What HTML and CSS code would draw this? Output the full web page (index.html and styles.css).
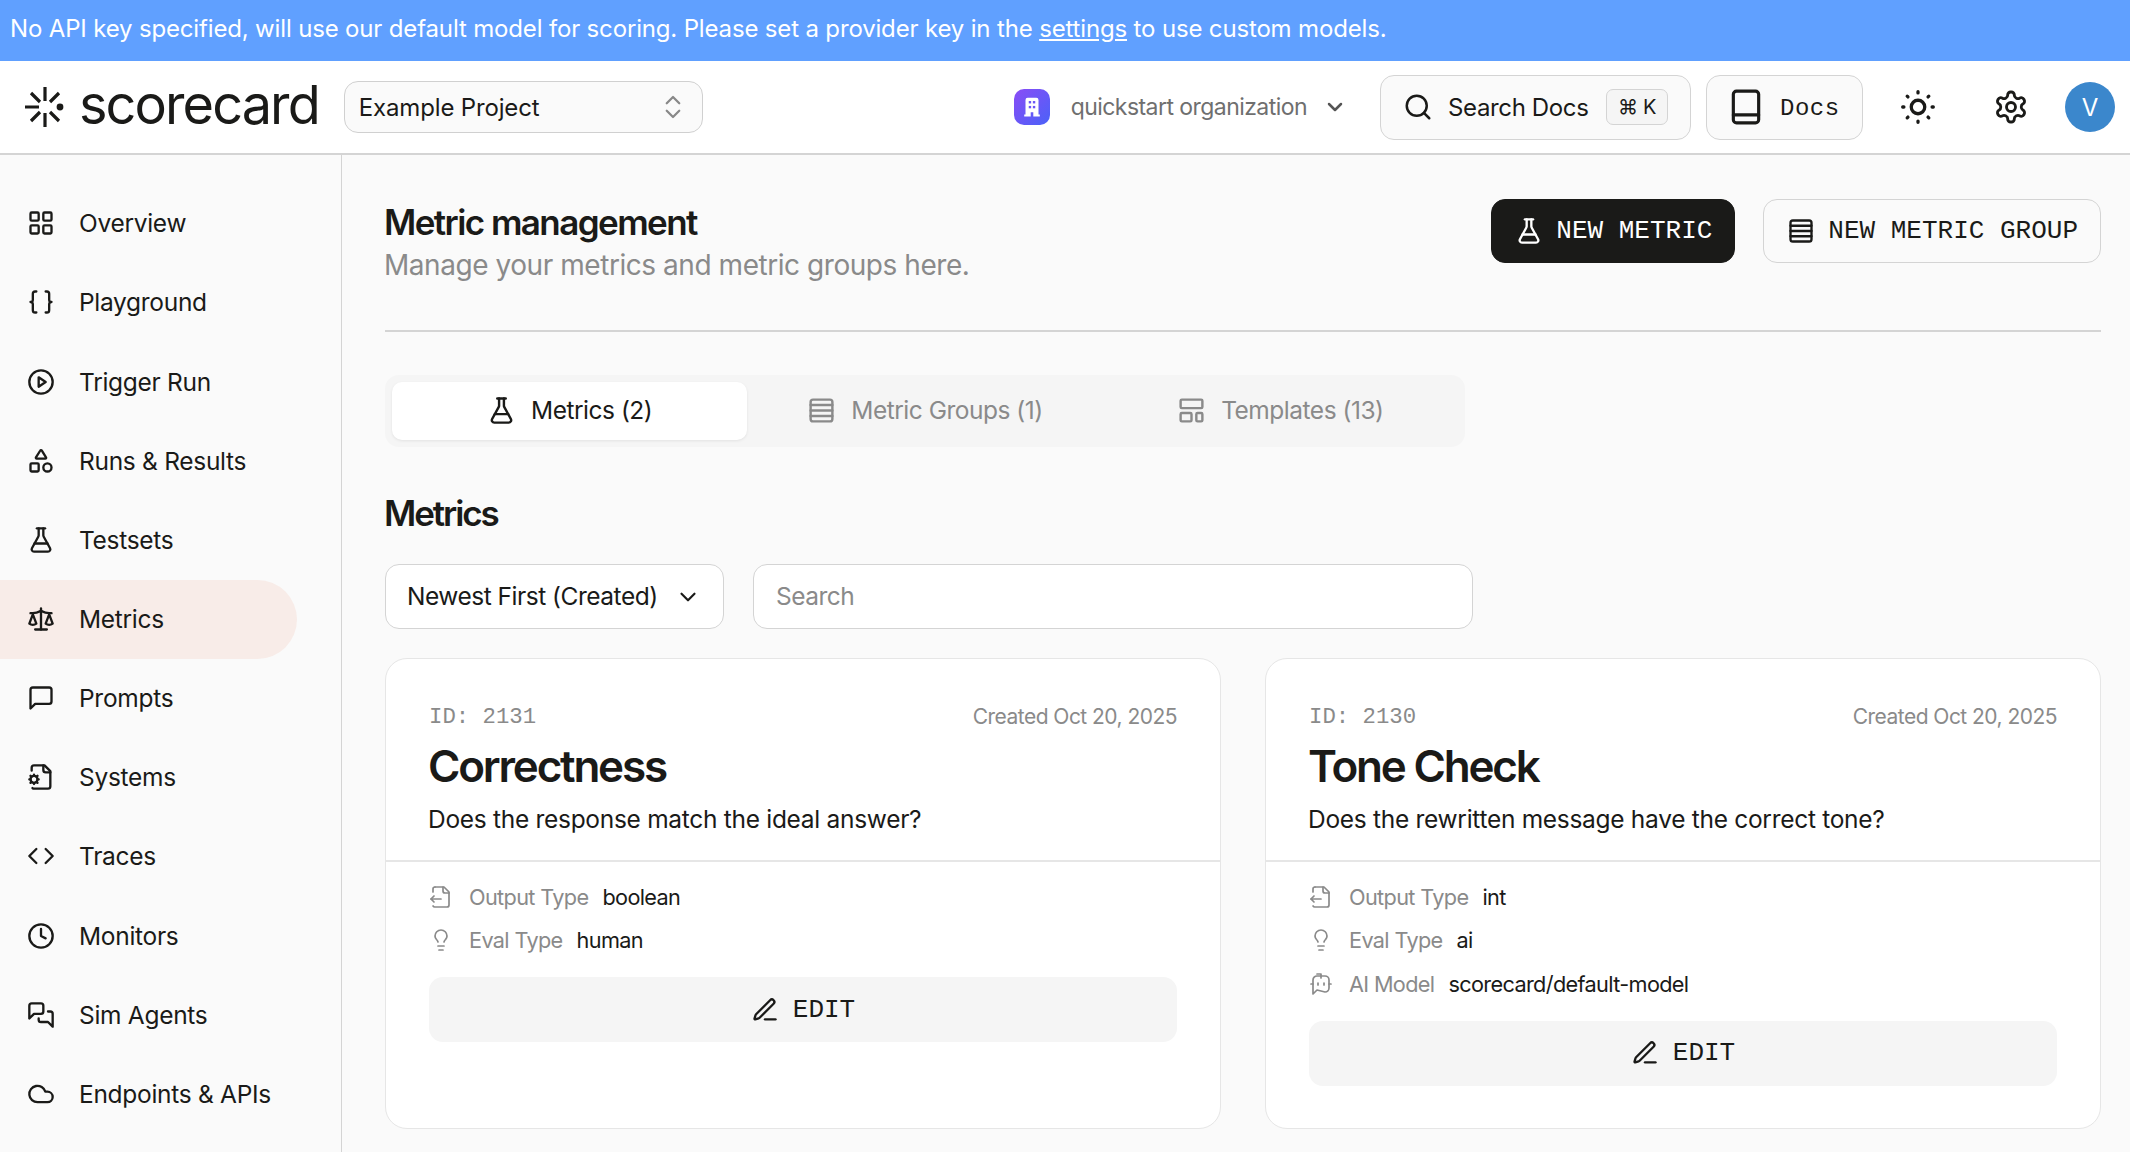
FILE: index.html
```html
<!DOCTYPE html>
<html lang="en">
<head>
    <meta charset="UTF-8">
    <title>Metric management</title>
    <link rel="stylesheet" href="styles.css">
</head>
<body>
    <svg class="sprite" xmlns="http://www.w3.org/2000/svg">
        <symbol id="i-grid" viewBox="0 0 24 24"><rect x="3" y="3" width="7" height="7" rx="1"/><rect x="14" y="3" width="7" height="7" rx="1"/><rect x="14" y="14" width="7" height="7" rx="1"/><rect x="3" y="14" width="7" height="7" rx="1"/></symbol>
        <symbol id="i-braces" viewBox="0 0 24 24"><path d="M8 3H7a2 2 0 0 0-2 2v5a2 2 0 0 1-2 2 2 2 0 0 1 2 2v5c0 1.1.9 2 2 2h1"/><path d="M16 21h1a2 2 0 0 0 2-2v-5c0-1.1.9-2 2-2a2 2 0 0 1-2-2V5a2 2 0 0 0-2-2h-1"/></symbol>
        <symbol id="i-play" viewBox="0 0 24 24"><circle cx="12" cy="12" r="10"/><polygon points="10 8 16 12 10 16 10 8"/></symbol>
        <symbol id="i-shapes" viewBox="0 0 24 24"><path d="M8.3 10a.7.7 0 0 1-.626-1.079L11.4 3a.7.7 0 0 1 1.198-.043L16.3 8.9a.7.7 0 0 1-.572 1.1Z"/><rect x="3" y="14" width="7" height="7" rx="1"/><circle cx="17.5" cy="17.5" r="3.5"/></symbol>
        <symbol id="i-flask" viewBox="0 0 24 24"><path d="M14 2v6a2 2 0 0 0 .245.96l5.51 10.08A2 2 0 0 1 18 22H6a2 2 0 0 1-1.755-2.96l5.51-10.08A2 2 0 0 0 10 8V2"/><path d="M6.453 15h11.094"/><path d="M8.5 2h7"/></symbol>
        <symbol id="i-scale" viewBox="0 0 24 24"><path d="m16 16 3-8 3 8c-.87.65-1.92 1-3 1s-2.13-.35-3-1Z"/><path d="m2 16 3-8 3 8c-.87.65-1.92 1-3 1s-2.13-.35-3-1Z"/><path d="M7 21h10"/><path d="M12 3v18"/><path d="M3 7h2c2 0 5-1 7-2 2 1 5 2 7 2h2"/></symbol>
        <symbol id="i-message" viewBox="0 0 24 24"><path d="M21 15a2 2 0 0 1-2 2H7l-4 4V5a2 2 0 0 1 2-2h14a2 2 0 0 1 2 2z"/></symbol>
        <symbol id="i-filecog" viewBox="0 0 24 24"><path d="M14 2v4a2 2 0 0 0 2 2h4"/><path d="M4.7 21.5a2 2 0 0 0 1.3.5h12a2 2 0 0 0 2-2V7l-5-5H6a2 2 0 0 0-2 2v2.5"/><circle cx="6" cy="14" r="3"/><path d="M6 10v1M6 17v1M10 14H9M3 14H2M9 11l-.9.9M3.9 16.100l-.9.9M9 17l-.9-.9M3.9 11.900 3 11"/></symbol>
        <symbol id="i-code" viewBox="0 0 24 24"><path d="m16 18 6-6-6-6"/><path d="m8 6-6 6 6 6"/></symbol>
        <symbol id="i-clock" viewBox="0 0 24 24"><circle cx="12" cy="12" r="10"/><polyline points="12 6 12 12 16 14"/></symbol>
        <symbol id="i-messages" viewBox="0 0 24 24"><path d="M14 9a2 2 0 0 1-2 2H6l-4 4V4a2 2 0 0 1 2-2h8a2 2 0 0 1 2 2z"/><path d="M18 9h2a2 2 0 0 1 2 2v11l-4-4h-6a2 2 0 0 1-2-2v-1"/></symbol>
        <symbol id="i-cloud" viewBox="0 0 24 24"><path d="M17.500 19H9a7 7 0 1 1 6.710-9h1.790a4.500 4.500 0 1 1 0 9Z"/></symbol>
        <symbol id="i-search" viewBox="0 0 24 24"><circle cx="11" cy="11" r="8"/><path d="m21 21-4.300-4.300"/></symbol>
        <symbol id="i-book" viewBox="0 0 24 24"><rect x="4" y="2" width="16" height="20" rx="2"/><path d="M4 17h16"/></symbol>
        <symbol id="i-sun" viewBox="0 0 24 24"><circle cx="12" cy="12" r="4.500"/><path d="M12 1.800v.8M12 21.400v.8M4.800 4.800l.5.5M18.700 18.700l.5.5M1.800 12h.8M21.400 12h.8M4.800 19.200l.5-.5M18.700 5.300l.5-.5"/></symbol>
        <symbol id="i-gear" viewBox="0 0 24 24"><path d="M12.220 2h-.44a2 2 0 0 0-2 2v.18a2 2 0 0 1-1 1.730l-.43.25a2 2 0 0 1-2 0l-.15-.08a2 2 0 0 0-2.730.73l-.22.38a2 2 0 0 0 .73 2.730l.15.1a2 2 0 0 1 1 1.720v.51a2 2 0 0 1-1 1.740l-.15.09a2 2 0 0 0-.73 2.730l.22.38a2 2 0 0 0 2.730.73l.15-.08a2 2 0 0 1 2 0l.43.25a2 2 0 0 1 1 1.730V20a2 2 0 0 0 2 2h.44a2 2 0 0 0 2-2v-.18a2 2 0 0 1 1-1.730l.43-.25a2 2 0 0 1 2 0l.15.08a2 2 0 0 0 2.730-.73l.22-.39a2 2 0 0 0-.73-2.730l-.15-.08a2 2 0 0 1-1-1.740v-.5a2 2 0 0 1 1-1.740l.15-.09a2 2 0 0 0 .73-2.730l-.22-.38a2 2 0 0 0-2.730-.73l-.15.08a2 2 0 0 1-2 0l-.43-.25a2 2 0 0 1-1-1.730V4a2 2 0 0 0-2-2z"/><circle cx="12" cy="12" r="3"/></symbol>
        <symbol id="i-rows" viewBox="0 0 24 24"><rect x="3" y="3" width="18" height="18" rx="2"/><path d="M21 7.500H3M21 12H3M21 16.500H3"/></symbol>
        <symbol id="i-template" viewBox="0 0 24 24"><rect x="3" y="3" width="18" height="7" rx="1"/><rect x="3" y="14" width="9" height="7" rx="1"/><rect x="16" y="14" width="5" height="7" rx="1"/></symbol>
        <symbol id="i-pencil" viewBox="0 0 24 24"><path d="M12 20h9"/><path d="M16.376 3.622a1 1 0 0 1 3.002 3.002L7.368 18.635a2 2 0 0 1-.855.506l-2.872.838a.5.5 0 0 1-.62-.62l.838-2.872a2 2 0 0 1 .506-.854z"/></symbol>
        <symbol id="i-fileout" viewBox="0 0 24 24"><path d="M14 2v4a2 2 0 0 0 2 2h4"/><path d="M4 7V4a2 2 0 0 1 2-2"/><path d="M4.060 21a2 2 0 0 0 2 1H18a2 2 0 0 0 2-2V7l-5-5H6"/><path d="m5 11-3 3"/><path d="m5 17-3-3h10"/></symbol>
        <symbol id="i-bulb" viewBox="0 0 24 24"><path d="M15 14c.2-1 .7-1.700 1.500-2.500 1-.9 1.500-2.200 1.500-3.500A6 6 0 0 0 6 8c0 1 .2 2.200 1.500 3.500.7.7 1.300 1.500 1.500 2.500"/><path d="M9 18h6"/><path d="M10 22h4"/></symbol>
        <symbol id="i-bot" viewBox="0 0 24 24"><path d="M12 6V2H8"/><path d="m8 18-4 4V8a4 4 0 0 1 4-4h8a4 4 0 0 1 4 4v8a4 4 0 0 1-4 4Z"/><path d="M2 12h2"/><path d="M9 11v2"/><path d="M15 11v2"/><path d="M20 12h2"/></symbol>
        <symbol id="i-down" viewBox="0 0 24 24"><path d="m6 9 6 6 6-6"/></symbol>
        <symbol id="i-updown" viewBox="0 0 24 24"><path d="m7 15 5 5 5-5"/><path d="m7 9 5-5 5 5"/></symbol>
    </svg>

    <div class="banner"><span>No API key specified, will use our default model for scoring. Please set a provider key in the <a href="#">settings</a> to use custom models.</span></div>

    <!-- Top bar -->
    <header class="topbar">
        <div class="brand">
            <svg class="brand-mark" viewBox="0 0 40 40"><path d="M20 0v14M20 26v14M0 20h14M6 6l9 9M25 25l9 9M34 6l-9 9M15 25l-9 9"/><circle cx="35" cy="20" r="3.400"/></svg>
            <span class="brand-name">scorecard</span>
        </div>
        <div class="project-select">
            <span>Example Project</span>
            <svg class="ic ic-updown"><use href="#i-updown"/></svg>
        </div>
        <div class="topbar-right">
            <div class="org">
                <span class="org-badge">
                    <svg viewBox="0 0 24 24"><path d="M6 5.500a2 2 0 0 1 2-2h8a2 2 0 0 1 2 2V19h1.200v1.800h-6v-4h-2.400v4h-6V19H6z"/><rect class="win" x="9" y="6.500" width="2.200" height="2.200"/><rect class="win" x="12.800" y="6.500" width="2.200" height="2.200"/><rect class="win" x="9" y="11" width="2.200" height="2.200"/><rect class="win" x="12.800" y="11" width="2.200" height="2.200"/></svg>
                </span>
                <span class="org-name">quickstart organization</span>
                <svg class="ic ic-org"><use href="#i-down"/></svg>
            </div>
            <button class="tool-btn search-docs">
                <svg class="ic ic-tool"><use href="#i-search"/></svg>
                <span>Search Docs</span>
                <kbd class="shortcut">⌘ K</kbd>
            </button>
            <button class="tool-btn docs-btn">
                <svg class="ic ic-book"><use href="#i-book"/></svg>
                <span>Docs</span>
            </button>
            <svg class="ic ic-round theme"><use href="#i-sun"/></svg>
            <svg class="ic ic-round settings"><use href="#i-gear"/></svg>
            <span class="avatar">V</span>
        </div>
    </header>

    <div class="layout">
        <!-- Sidebar -->
        <nav class="sidebar">
            <a class="nav-item" href="#"><svg class="ic ic-nav"><use href="#i-grid"/></svg>Overview</a>
            <a class="nav-item" href="#"><svg class="ic ic-nav"><use href="#i-braces"/></svg>Playground</a>
            <a class="nav-item" href="#"><svg class="ic ic-nav"><use href="#i-play"/></svg>Trigger Run</a>
            <a class="nav-item" href="#"><svg class="ic ic-nav"><use href="#i-shapes"/></svg>Runs &amp; Results</a>
            <a class="nav-item" href="#"><svg class="ic ic-nav"><use href="#i-flask"/></svg>Testsets</a>
            <a class="nav-item active" href="#"><svg class="ic ic-nav"><use href="#i-scale"/></svg>Metrics</a>
            <a class="nav-item" href="#"><svg class="ic ic-nav"><use href="#i-message"/></svg>Prompts</a>
            <a class="nav-item" href="#"><svg class="ic ic-nav"><use href="#i-filecog"/></svg>Systems</a>
            <a class="nav-item" href="#"><svg class="ic ic-nav"><use href="#i-code"/></svg>Traces</a>
            <a class="nav-item" href="#"><svg class="ic ic-nav"><use href="#i-clock"/></svg>Monitors</a>
            <a class="nav-item" href="#"><svg class="ic ic-nav"><use href="#i-messages"/></svg>Sim Agents</a>
            <a class="nav-item" href="#"><svg class="ic ic-nav"><use href="#i-cloud"/></svg>Endpoints &amp; APIs</a>
        </nav>

        <!-- Main content -->
        <main class="content">
            <div class="page-head">
                <div>
                    <h1>Metric management</h1>
                    <p class="page-sub">Manage your metrics and metric groups here.</p>
                </div>
                <div class="page-actions">
                    <button class="action-btn primary"><svg class="ic ic-action"><use href="#i-flask"/></svg>NEW METRIC</button>
                    <button class="action-btn"><svg class="ic ic-action"><use href="#i-rows"/></svg>NEW METRIC GROUP</button>
                </div>
            </div>

            <div class="tabs">
                <div class="tab selected"><svg class="ic ic-tab"><use href="#i-flask"/></svg>Metrics (2)</div>
                <div class="tab"><svg class="ic ic-tab"><use href="#i-rows"/></svg>Metric Groups (1)</div>
                <div class="tab"><svg class="ic ic-tab"><use href="#i-template"/></svg>Templates (13)</div>
            </div>

            <h2>Metrics</h2>

            <div class="filters">
                <div class="sort-select"><span>Newest First (Created)</span><svg class="ic ic-sort"><use href="#i-down"/></svg></div>
                <div class="search-box">Search</div>
            </div>

            <div class="cards">
                <article class="card">
                    <div class="card-top">
                        <div class="card-meta"><span class="card-id">ID: 2131</span><span>Created Oct 20, 2025</span></div>
                        <h3>Correctness</h3>
                        <p class="card-desc">Does the response match the ideal answer?</p>
                    </div>
                    <div class="card-body">
                        <div class="prop"><svg class="ic ic-prop"><use href="#i-fileout"/></svg><span class="prop-label">Output Type</span><span>boolean</span></div>
                        <div class="prop"><svg class="ic ic-prop"><use href="#i-bulb"/></svg><span class="prop-label">Eval Type</span><span>human</span></div>
                        <button class="edit-btn"><svg class="ic ic-edit"><use href="#i-pencil"/></svg>EDIT</button>
                    </div>
                </article>
                <article class="card">
                    <div class="card-top">
                        <div class="card-meta"><span class="card-id">ID: 2130</span><span>Created Oct 20, 2025</span></div>
                        <h3>Tone Check</h3>
                        <p class="card-desc">Does the rewritten message have the correct tone?</p>
                    </div>
                    <div class="card-body">
                        <div class="prop"><svg class="ic ic-prop"><use href="#i-fileout"/></svg><span class="prop-label">Output Type</span><span>int</span></div>
                        <div class="prop"><svg class="ic ic-prop"><use href="#i-bulb"/></svg><span class="prop-label">Eval Type</span><span>ai</span></div>
                        <div class="prop"><svg class="ic ic-prop"><use href="#i-bot"/></svg><span class="prop-label">AI Model</span><span>scorecard/default-model</span></div>
                        <button class="edit-btn"><svg class="ic ic-edit"><use href="#i-pencil"/></svg>EDIT</button>
                    </div>
                </article>
            </div>
        </main>
    </div>
</body>
</html>
```

FILE: styles.css
```css
* {
    box-sizing: border-box;
}
html, body {
    height: 100%;
}
body {
    margin: 0;
    overflow: hidden;
    display: flex;
    flex-direction: column;
    background-color: #fafafa;
    color: #1a1a18;
    font-family: Inter, "Liberation Sans", sans-serif;
    letter-spacing: -0.01em;
}
button {
    font: inherit;
    color: inherit;
    cursor: pointer;
}
h1, h2, h3, p {
    margin: 0;
}
.sprite {
    display: none;
}
.ic {
    display: block;
    flex: none;
    fill: none;
    stroke: currentColor;
    stroke-width: 2;
    stroke-linecap: round;
    stroke-linejoin: round;
}

/* Banner */
.banner {
    height: 61px;
    flex: none;
    padding: 0 10px 5px;
    display: flex;
    align-items: center;
    background-color: #60a0ff;
    color: #fff;
    font-size: 24px;
}
.banner a {
    color: #fff;
}

/* Top bar */
.topbar {
    height: 94px;
    flex: none;
    display: flex;
    align-items: center;
    padding: 0 15px 0 25px;
    background-color: #fff;
    border-bottom: 2px solid #d4d4d4;
}
.brand {
    display: flex;
    align-items: center;
    gap: 14px;
}
.brand-mark {
    width: 40px;
    height: 40px;
    fill: #1a1a18;
    stroke: #1a1a18;
    stroke-width: 3.200;
}
.brand-mark circle {
    stroke: none;
}
.brand-name {
    font-size: 54px;
    line-height: 1;
    letter-spacing: -0.035em;
    margin-top: -5px;
}
.project-select {
    width: 359px;
    height: 52px;
    margin-left: 25px;
    padding: 0 14px;
    display: flex;
    align-items: center;
    justify-content: space-between;
    background-color: #fafafa;
    border: 1.500px solid #d0d0d0;
    border-radius: 14px;
    font-size: 24px;
}
.ic-updown {
    width: 30px;
    height: 30px;
    color: #888;
    stroke-width: 1.800;
}
.topbar-right {
    margin-left: auto;
    display: flex;
    align-items: center;
}
.org {
    display: flex;
    align-items: center;
    margin-right: 33px;
    color: #6f6f6f;
    font-size: 23px;
    letter-spacing: -0.024em;
}
.org-badge {
    width: 36px;
    height: 36px;
    border-radius: 10px;
    background: linear-gradient(135deg, #8a4cf6, #4a62f8);
    display: flex;
    align-items: center;
    justify-content: center;
}
.org-badge svg {
    width: 26px;
    height: 26px;
    fill: #fff;
}
.org-badge .win {
    fill: #6a55f6;
}
.org-name {
    margin-left: 21px;
}
.ic-org {
    width: 24px;
    height: 24px;
    margin-left: 16px;
    color: #555;
    stroke-width: 2.500;
}
.tool-btn {
    height: 65px;
    display: flex;
    align-items: center;
    background-color: #fafafa;
    border: 1.500px solid #d4d4d4;
    border-radius: 14px;
    font-size: 24px;
    white-space: nowrap;
}
.ic-tool {
    width: 30px;
    height: 30px;
}
.ic-book {
    width: 38px;
    height: 38px;
}
.search-docs {
    width: 311px;
    padding: 0 22px;
    gap: 15px;
    letter-spacing: -0.015em;
}
.shortcut {
    margin-left: auto;
    height: 36px;
    padding: 0 11px;
    display: flex;
    align-items: center;
    background-color: #f5f5f5;
    border: 1.500px solid #d4d4d4;
    border-radius: 7px;
    font-family: inherit;
    font-size: 20px;
}
.docs-btn {
    width: 157px;
    margin-left: 15px;
    padding: 0 16px 0 20px;
    gap: 15px;
    font-family: "Liberation Mono", monospace;
    letter-spacing: 0.02em;
}
.docs-btn span {
    margin-top: 2px;
}
.ic-round {
    width: 36px;
    height: 36px;
}
.theme {
    margin-left: 37px;
    stroke-width: 2.200;
}
.settings {
    margin-left: 57px;
    stroke-width: 1.900;
}
.avatar {
    width: 50px;
    height: 50px;
    margin-left: 36px;
    border-radius: 50%;
    display: flex;
    align-items: center;
    justify-content: center;
    background-color: #3b87cc;
    color: #fff;
    font-size: 24px;
}

/* Layout */
.layout {
    flex: 1;
    min-height: 0;
    display: flex;
}
.sidebar {
    width: 342px;
    flex: none;
    padding-top: 29.500px;
    border-right: 1.500px solid #d4d4d4;
}
.nav-item {
    width: 297px;
    height: 79.150px;
    padding: 0 0 1.500px 27px;
    display: flex;
    align-items: center;
    gap: 24px;
    border-radius: 0 40px 40px 0;
    color: #1a1a18;
    font-size: 24.500px;
    letter-spacing: -0.012em;
    text-decoration: none;
}
.nav-item.active {
    background-color: #f8ece8;
}
.ic-nav {
    width: 28px;
    height: 28px;
    stroke-width: 2;
}
.content {
    flex: 1;
    min-width: 0;
    padding: 44px 29px 0 43px;
}

/* Page head */
.page-head {
    height: 133px;
    display: flex;
    justify-content: space-between;
    align-items: flex-start;
    border-bottom: 2px solid #d4d4d4;
}
h1 {
    margin-left: -1px;
    font-size: 35px;
    font-weight: 600;
    line-height: 46px;
    letter-spacing: -0.045em;
}
.page-sub {
    margin-left: -1px;
    font-size: 28px;
    line-height: 40px;
    letter-spacing: -0.016em;
    color: #8a8a8a;
}
.page-actions {
    display: flex;
    gap: 28px;
}
.action-btn {
    height: 64px;
    padding: 0 22px 0 23px;
    display: flex;
    align-items: center;
    gap: 13px;
    background-color: #fafafa;
    border: 1.500px solid #d4d4d4;
    border-radius: 14px;
    font-family: "Liberation Mono", monospace;
    font-size: 26px;
    letter-spacing: 0;
}
.action-btn.primary {
    background-color: #1a1a18;
    border-color: #1a1a18;
    color: #fff;
}
.ic-action {
    width: 28px;
    height: 28px;
}

/* Tabs */
.tabs {
    width: 1080px;
    height: 72px;
    margin-top: 43px;
    padding: 7px;
    display: grid;
    grid-template-columns: repeat(3, 1fr);
    background-color: #f5f5f5;
    border-radius: 14px;
}
.tab {
    padding-bottom: 1.500px;
    display: flex;
    align-items: center;
    justify-content: center;
    gap: 15px;
    border-radius: 10px;
    color: #8a8a8a;
    font-size: 24.500px;
    letter-spacing: -0.02em;
}
.tab.selected {
    background-color: #fff;
    color: #1a1a18;
    box-shadow: 0 1px 3px rgba(0, 0, 0, 0.08);
}
.ic-tab {
    width: 29px;
    height: 29px;
}
h2 {
    margin-top: 43px;
    margin-left: -1px;
    font-size: 35px;
    font-weight: 600;
    line-height: 46px;
    letter-spacing: -0.06em;
}

/* Filters */
.filters {
    margin-top: 28px;
    display: flex;
    gap: 29px;
}
.sort-select {
    width: 339px;
    height: 65px;
    padding: 0 22px 0 21px;
    display: flex;
    align-items: center;
    justify-content: space-between;
    background-color: #fff;
    border: 1.500px solid #d4d4d4;
    border-radius: 14px;
    font-size: 24.500px;
    letter-spacing: -0.02em;
}
.sort-select span {
    margin-top: -2px;
}
.ic-sort {
    width: 26px;
    height: 26px;
}
.search-box {
    width: 720px;
    height: 65px;
    padding: 0 22px 2px;
    display: flex;
    align-items: center;
    background-color: #fff;
    border: 1.500px solid #d4d4d4;
    border-radius: 14px;
    color: #8a8a8a;
    font-size: 24.500px;
    letter-spacing: -0.02em;
}

/* Cards */
.cards {
    margin-top: 29px;
    display: grid;
    grid-template-columns: 1fr 1fr;
    gap: 44px;
}
.card {
    height: 471px;
    background-color: #fff;
    border: 1.500px solid #e6e6e6;
    border-radius: 22px;
}
.card-top {
    height: 203px;
    padding: 43px 43px 0;
    border-bottom: 2px solid #e6e6e6;
}
.card-meta {
    display: flex;
    justify-content: space-between;
    align-items: center;
    height: 28px;
    color: #8a8a8a;
    font-size: 21px;
    letter-spacing: -0.025em;
}
.card-id {
    margin-top: 2px;
    font-family: "Liberation Mono", monospace;
    font-size: 22.300px;
    letter-spacing: 0;
}
h3 {
    margin-top: 6px;
    margin-left: -1px;
    font-size: 44px;
    font-weight: 600;
    line-height: 60px;
    letter-spacing: -0.05em;
}
.card-desc {
    margin-top: 5px;
    margin-left: -1px;
    font-size: 24.500px;
    line-height: 36px;
    letter-spacing: -0.012em;
}
.card-body {
    padding: 13px 43px 0;
}
.prop {
    height: 43.500px;
    display: flex;
    align-items: center;
    font-size: 21.700px;
    letter-spacing: -0.03em;
}
.prop-label {
    margin: 0 14px 0 16px;
    color: #8a8a8a;
}
.ic-prop {
    width: 24px;
    height: 24px;
    color: #8a8a8a;
    stroke-width: 1.700;
}
.edit-btn {
    width: 100%;
    height: 65px;
    margin-top: 15px;
    display: flex;
    align-items: center;
    justify-content: center;
    gap: 14px;
    background-color: #f5f5f5;
    border: none;
    border-radius: 14px;
    font-family: "Liberation Mono", monospace;
    font-size: 26px;
    letter-spacing: 0;
}
.ic-edit {
    width: 28px;
    height: 28px;
}
```
